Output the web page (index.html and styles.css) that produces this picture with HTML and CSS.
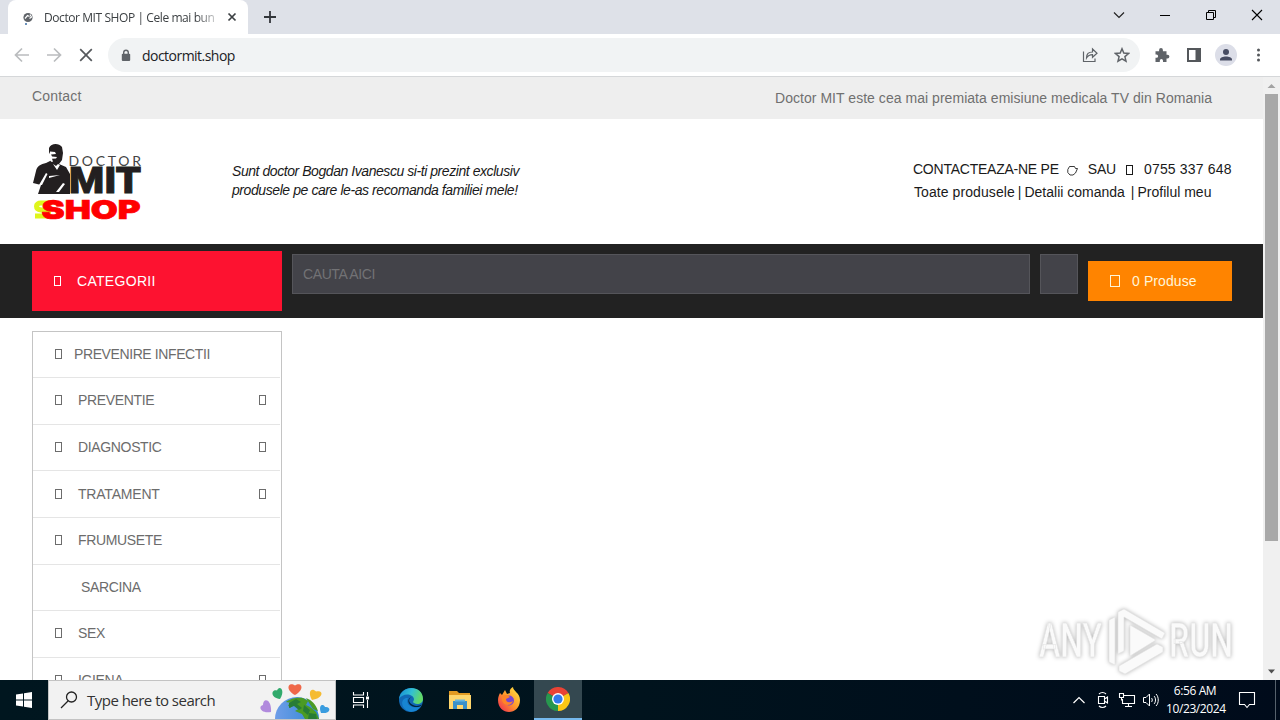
FILE: index.html
```html
<!DOCTYPE html>
<html lang="ro">
<head>
<meta charset="utf-8">
<title>Doctor MIT SHOP</title>
<link rel="stylesheet" href="styles.css">
</head>
<body>
<div class="screen">
  <div class="tabstrip">
    <div class="tab">
      <svg class="favicon" width="12" height="14" viewBox="0 0 12 14"><circle cx="6" cy="5.5" r="4.600" fill="#5f6368"/><path d="M3 6.500l2.500-3 2 1M8 2.500l1.500 2.500-2 1.500" stroke="#fff" stroke-width="1.200" fill="none"/><circle cx="4" cy="12" r="1" fill="#3b6ea5"/></svg>
      <span class="tab-title">Doctor MIT SHOP | Cele mai bun</span>
      <svg width="10" height="10" viewBox="0 0 10 10"><path d="M1.500 1.500l7 7M8.500 1.500l-7 7" stroke="#3c4043" stroke-width="1.700"/></svg>
    </div>
    <svg class="newtab" width="12" height="12" viewBox="0 0 12 12"><path d="M6 0v12M0 6h12" stroke="#33363b" stroke-width="1.800"/></svg>
    <div class="winbtns">
      <svg width="12" height="12" viewBox="0 0 12 12"><path d="M1 3.500l5 5 5-5" fill="none" stroke="#222" stroke-width="1.200"/></svg>
      <svg width="12" height="12" viewBox="0 0 12 12"><path d="M1 6.500h10" stroke="#000"/></svg>
      <svg width="12" height="12" viewBox="0 0 12 12"><path d="M1.500 3.500h7v7h-7zM3.500 3.500v-2h7v7h-2" fill="none" stroke="#000"/></svg>
      <svg width="12" height="12" viewBox="0 0 12 12"><path d="M1 1l10 10M11 1L1 11" stroke="#000" stroke-width="1.100"/></svg>
    </div>
  </div>
  <div class="toolbar">
    <svg class="nav-icon" width="16" height="16" viewBox="0 0 16 16"><path d="M15 8H2M8 1.500L1.500 8 8 14.500" fill="none" stroke="#babcbe" stroke-width="1.700"/></svg>
    <svg class="nav-icon" width="16" height="16" viewBox="0 0 16 16"><path d="M1 8h13M8 1.500L14.500 8 8 14.500" fill="none" stroke="#babcbe" stroke-width="1.700"/></svg>
    <svg class="nav-icon" width="16" height="16" viewBox="0 0 16 16"><path d="M2.200 2.200l11.600 11.600M13.800 2.200L2.200 13.800" stroke="#55585c" stroke-width="1.700"/></svg>
    <div class="omnibox">
      <svg width="10" height="13" viewBox="0 0 10 13"><path d="M2.700 5V3.500a2.300 2.300 0 0 1 4.600 0V5" fill="none" stroke="#5f6368" stroke-width="1.400"/><rect x=".8" y="4.700" width="8.400" height="7.300" rx="1" fill="#5f6368"/></svg>
      <span class="url">doctormit.shop</span>
      <svg width="16" height="16" viewBox="0 0 16 16"><path d="M1.500 4.500v10h11.500v-3M4.500 11c0-4 2-6 6-6V2l4.500 4.300-4.500 4V7.700C8 7.700 6 8.500 4.500 11z" fill="none" stroke="#5f6368" stroke-width="1.200"/></svg>
      <svg width="16" height="16" viewBox="0 0 16 16"><path d="M8 1.800l1.800 4.300 4.700.4-3.600 3.100 1.100 4.600L8 11.800l-4 2.400 1.100-4.600L1.500 6.500l4.700-.4z" fill="none" stroke="#5f6368" stroke-width="1.500"/></svg>
    </div>
    <div class="actions">
      <svg width="16" height="16" viewBox="0 0 16 16"><path d="M1.500 4.200h3.600V3a1.900 1.900 0 0 1 3.800 0v1.200h3.600v3.500h1a1.900 1.900 0 0 1 0 3.800h-1V15H9v-1.300a1.600 1.600 0 0 0-3.200 0V15H1.500v-4.200h1a1.600 1.600 0 0 0 0-3.200h-1z" fill="#5f6368"/></svg>
      <svg width="16" height="16" viewBox="0 0 16 16"><path d="M2 2h12v12H2z" fill="none" stroke="#54575b" stroke-width="2"/><path d="M9.500 2H14v12H9.500z" fill="#54575b"/></svg>
      <svg class="avatar" width="22" height="22" viewBox="0 0 22 22"><circle cx="11" cy="11" r="11" fill="#dcdee8"/><circle cx="11" cy="8" r="3" fill="#474c62"/><path d="M5 16.500v-1c0-4 12-4 12 0v1z" fill="#474c62"/></svg>
      <svg width="16" height="16" viewBox="0 0 16 16"><g fill="#54575b"><circle cx="8.500" cy="3" r="1.500"/><circle cx="8.500" cy="8" r="1.500"/><circle cx="8.500" cy="13" r="1.500"/></g></svg>
    </div>
  </div>

  <div class="viewport">
    <div class="page">
      <div class="topbar"><span class="contact">Contact</span><span class="slogan">Doctor MIT este cea mai premiata emisiune medicala TV din Romania</span></div>
      <div class="header">
        <svg class="logo" width="112" height="80" viewBox="0 0 112 80">
          <path d="M17 6c2-5 10-5 13-1l1 6-1 7-3 4 7 3 4 7v20H6l3-9-8-2 3-12c1-5 5-7 10-8l6-3-1-5-2-2z" fill="#231f20"/>
          <path d="M18 9.500l5 .5 1 2-5 .5 1 2 5 .5-1 1.500-4 .2 1 3h-2l-2-5zM21 22l4 6 3-5-2-1-2 2zM7 43l7-12 1.500 1L10 43zM17 34l11-1-11 3zM31 41l-7 9 3 0 6-8z" fill="#fff"/>
          <text class="logo-doctor" x="36.500" y="23.500" textLength="72.500">DOCTOR</text>
          <text class="logo-mit" x="37" y="51" textLength="72" lengthAdjust="spacingAndGlyphs">MIT</text>
          <path class="logo-glow" d="M20 61H9c-6 0-6 6 0 7h5c4 1 3 6-1 6H3"/>
          <text class="logo-shop" x="9.500" y="76.500" textLength="99" lengthAdjust="spacingAndGlyphs">SHOP</text>
        </svg>
        <div class="intro"><div class="in1">Sunt doctor Bogdan Ivanescu si-ti prezint exclusiv</div><div class="in2">produsele pe care le-as recomanda familiei mele!</div></div>
        <div class="links">
          <div class="call"><span class="c1">CONTACTEAZA-NE PE</span><svg width="11" height="11" viewBox="0 0 11 11"><path d="M2.500 1.500h5l1 2 2 0-2 4.500-2.500 2H3L.8 7.500V4.500z" fill="none" stroke="#222" stroke-width=".9"/></svg><span class="c2">SAU</span><i class="glyph"></i><span class="c3">0755 337 648</span></div>
          <div class="menu"><span class="m1">Toate produsele</span><span>|</span><span class="m2">Detalii comanda</span><span class="bar2">|</span><span class="m3">Profilul meu</span></div>
        </div>
      </div>
      <div class="navbar">
        <div class="cat"><i class="glyph"></i><span>CATEGORII</span></div>
        <div class="search"><span>CAUTA AICI</span></div>
        <div class="go"></div>
        <div class="cart"><i class="glyph"></i><span>0 Produse</span></div>
      </div>
      <div class="sidebar">
        <div class="item first"><i class="glyph"></i><span class="s0">PREVENIRE INFECTII</span></div>
        <div class="item"><i class="glyph"></i><span class="s1">PREVENTIE</span><i class="glyph more"></i></div>
        <div class="item"><i class="glyph"></i><span class="s2">DIAGNOSTIC</span><i class="glyph more"></i></div>
        <div class="item"><i class="glyph"></i><span class="s3">TRATAMENT</span><i class="glyph more"></i></div>
        <div class="item"><i class="glyph"></i><span class="s4">FRUMUSETE</span></div>
        <div class="item noicon"><span class="s5">SARCINA</span></div>
        <div class="item"><i class="glyph"></i><span class="s6">SEX</span></div>
        <div class="item"><i class="glyph"></i><span class="s7">IGIENA</span><i class="glyph more"></i></div>
      </div>
    </div>
    <div class="scrollbar">
      <svg width="17" height="17" viewBox="0 0 17 17"><path d="M4.500 11l4-4 4 4z" fill="#a3a3a3"/></svg>
      <div class="thumb"></div>
      <svg width="17" height="17" viewBox="0 0 17 17"><path d="M5 6.500h7l-3.500 4z" fill="#505050"/></svg>
    </div>
    <svg class="watermark" width="206" height="72" viewBox="0 0 206 72">
      <g class="wm">
        <text x="6" y="52" textLength="63" lengthAdjust="spacingAndGlyphs">ANY</text>
        <text x="136" y="52" textLength="64" lengthAdjust="spacingAndGlyphs">RUN</text>
        <path d="M76 57V15l6-3v48zM85 7l6-3 41 24-3 6-38-22v34l-6 3zM97 20l26 15-26 16zM86 61l38-22 6 3v5L92 69l-6-3z"/>
      </g>
    </svg>
  </div>

  <div class="taskbar">
    <div class="start"><svg width="18" height="18" viewBox="0 0 18 18"><path d="M1 3.500l7-1v6H1zM9 2.300L17 1v7.500H9zM1 9.500h7v6l-7-1zM9 9.500h8V17l-8-1.300z" fill="#fff"/></svg></div>
    <div class="tsearch">
      <svg width="18" height="18" viewBox="0 0 18 18"><circle cx="11.500" cy="6" r="5" fill="none" stroke="#222" stroke-width="1.300"/><path d="M8 10l-7 7" stroke="#222" stroke-width="1.300"/></svg>
      <span>Type here to search</span>
      <svg class="earth" width="76" height="38" viewBox="0 0 76 38">
        <defs><linearGradient id="sea"><stop offset="0" stop-color="#6e9de8"/><stop offset="1" stop-color="#3187d4"/></linearGradient></defs>
        <circle cx="38" cy="38" r="22" fill="url(#sea)"/>
        <path d="M27 21c4-4 13-5 17-4l5 3-2 4 4 2 6 5 3 7H46l-3-5-7-3 5-3-5-4-5 4-2-3 4-2zM47 17c6 2 10 7 12 13l-5-2z" fill="#4b9b24"/>
        <path d="M30 22l7-4 5 3-4 2 5 4-3 2-5-4-5 2zM45 24l6 5-2 5-5-4zM50 32l7 1 1 5h-9z" fill="#287c35"/>
        <path d="M36 14C25 8 30 0 36 4.500c6-4.500 11 3.500 0 9.500z" fill="#ef684a"/>
        <path d="M21 18c-10-1-9-10-3-8.500 2-6 9-1 3 8.500z" fill="#31aa6c"/>
        <path d="M53 19c-5-9 0-13 4-8.500 7-2 9 6-4 8.500z" fill="#f5bb32"/>
        <path d="M12 31C1 33-1 25 4 24c0-8 9-6 8 7z" fill="#b18add"/>
        <path d="M62 32c-3-8 2-10 4-6 6-1 7 7-4 6z" fill="#399cdf"/>
      </svg>
    </div>
    <div class="app"><svg width="18" height="18" viewBox="0 0 18 18"><path d="M1.500 1v3h10V1M1.500 17v-3h10v3M1.500 6.500h10v5h-10zM15.500 1v4M15.500 9v8" fill="none" stroke="#fff" stroke-width="1.100"/><path d="M14 5.500h3v3h-3z" fill="#fff"/></svg></div>
    <div class="app wide"><svg width="26" height="26" viewBox="0 0 26 26"><defs><linearGradient id="edge" x1="0" y1="0" x2="1" y2=".3"><stop offset="0" stop-color="#1489d5"/><stop offset=".55" stop-color="#32bfd4"/><stop offset="1" stop-color="#62d968"/></linearGradient></defs><circle cx="13" cy="13" r="12" fill="#1169b6"/><path d="M1 12C3-3 25-2 25 12c0 5-6 6-9 4-2-1 0-2 0-4-1-6-12-6-15 0z" fill="url(#edge)"/><path d="M10 11c-3 6 3 11 12 9-3 5-11 7-16 1-4-5-1-11 4-10z" fill="#1785d2"/><path d="M14 10c-4 1-4 6 1 8 3 1.500 6 1 9-.5-2 3-6 3-9 2-6-2-6-9-1-9.500z" fill="#00233b"/></svg></div>
    <div class="app"><svg class="folder" width="24" height="24" viewBox="0 0 24 24"><path d="M1 3h8l2 2h11v4H1z" fill="#e39b22"/><path d="M1 7h22v14H1z" fill="#ffd66c"/><path d="M5 13h14v8h-4v-4H9v4H5z" fill="#3a91c9"/><path d="M7 11.500h10v2H7z" fill="#66b6df"/></svg></div>
    <div class="app"><svg class="folder" width="26" height="26" viewBox="0 0 26 26"><defs><linearGradient id="fox" x1="1" y1="0" x2="0" y2="1"><stop offset="0" stop-color="#ffed45"/><stop offset=".5" stop-color="#ff982b"/><stop offset="1" stop-color="#ef2156"/></linearGradient></defs><path d="M4 6l2 2 3-5 2 4 3-1c-1-3 1-5 3-6 0 4 7 6 7 13 0 16-22 16-22 0 0-3 1-5 2-7z" fill="url(#fox)"/><circle cx="13" cy="13.500" r="5" fill="#7946d0"/><path d="M6 9c4-2 6-1 8 1l-4 2c0 4 4 4 7 2-2 6-10 5-11-1z" fill="#ff8427"/></svg></div>
    <div class="app active"><svg width="24" height="24" viewBox="0 0 24 24"><path d="M12 12L1.600 6A12 12 0 0 1 22.400 6z" fill="#e94335"/><path d="M12 12V24A12 12 0 0 1 1.600 6z" fill="#27974e"/><path d="M12 12L22.400 6A12 12 0 0 1 12 24z" fill="#fbc716"/><path d="M12 6h10.400L12 7z" fill="#e94335"/><path d="M17.200 15L12 24v-9z" fill="#fbc716"/><circle cx="12" cy="12" r="6" fill="#fff"/><circle cx="12" cy="12" r="4.600" fill="#327bed"/></svg></div>
    <div class="tray">
      <svg width="14" height="10" viewBox="0 0 14 10"><path d="M1.500 8L7 2.500 12.500 8" fill="none" stroke="#fff" stroke-width="1.200"/></svg>
      <svg class="cam" width="14" height="18" viewBox="0 0 14 18"><path d="M3 3c2-2 5-2 7 0M3 15c2 2 5 2 7 0M2.500 5.500h6v7h-6zM8.500 8l3-2v6l-3-2" fill="none" stroke="#fff" stroke-width="1.100"/></svg>
      <svg width="18" height="16" viewBox="0 0 18 16"><path d="M6 3.500h10.500v8H4.500V7M10.500 11.500v3M7 14.500h7M1.500 1.500h4v4h-4zM3.500 5.500v3" fill="none" stroke="#fff" stroke-width="1.100"/></svg>
      <svg class="vol" width="18" height="16" viewBox="0 0 18 16"><path d="M1.500 5.500H4L7.500 2v12L4 10.500H1.500zM9.500 6c1 1 1 3 0 4M12 4c2 2 2 6 0 8M14 2c3 3 3 9 0 12" fill="none" stroke="#fff"/></svg>
    </div>
    <div class="clock"><div>6:56 AM</div><div class="date">10/23/2024</div></div>
    <svg class="note" width="18" height="18" viewBox="0 0 18 18"><path d="M1.500 1.500h15v12h-5l-2.500 3-2.500-3h-5z" fill="none" stroke="#fff" stroke-width="1.100"/></svg>
    <div class="peek"></div>
  </div>
</div>
</body>
</html>
```
FILE: styles.css
```css
* { box-sizing: border-box; }
body { margin: 0; font-family: "Liberation Sans", Arial, sans-serif; font-size: 14px; color: #555; }
svg { display: block; flex: none; }
.screen { width: 1280px; height: 720px; display: flex; flex-direction: column; overflow: hidden; background: #fff; white-space: nowrap; }

.tabstrip { height: 34px; flex: none; background: #dee1e8; display: flex; align-items: center; padding-left: 8px; }
.tab { width: 240px; height: 34px; background: #fff; border-radius: 8px 8px 0 0; display: flex; align-items: center; padding: 0 11px 0 14px; }
.favicon { margin-top: 3px; }
.tab-title { width: 172px; margin: 0 11px 0 10px; font: 12px "Open Sans", sans-serif; letter-spacing: -.42px; color: #3c4043; -webkit-mask-image: linear-gradient(90deg, #000 88%, rgba(0, 0, 0, .25)); mask-image: linear-gradient(90deg, #000 88%, rgba(0, 0, 0, .25)); }
.newtab { margin-left: 16px; }
.winbtns { margin-left: auto; display: flex; gap: 34px; padding: 0 17px 5px 0; }

.toolbar { height: 43px; flex: none; display: flex; align-items: center; padding: 0 14px 0 14px; border-bottom: 1px solid #d5d7d9; }
.nav-icon { margin-right: 16px; }
.omnibox { width: 1032px; height: 34px; margin-left: -2px; border-radius: 17px; background: #f1f3f4; display: flex; align-items: center; padding: 0 10px 0 13px; gap: 16px; }
.url { flex: 1; margin-left: -5px; font: 14px "Open Sans", sans-serif; letter-spacing: -.53px; color: #202124; }
.actions { display: flex; align-items: center; gap: 16px; padding-left: 14px; }
.avatar { margin: 0 -3px; }

.viewport { height: 603px; flex: none; display: flex; position: relative; overflow: hidden; }
.page { width: 1263px; height: 603px; overflow: hidden; }
.topbar { height: 42px; background: #eee; display: flex; justify-content: space-between; padding: 11px 51px 0 32px; line-height: 17px; color: #707070; }
.contact { letter-spacing: .2px; }
.slogan { padding-top: 2px; width: 437px; letter-spacing: .04px; }
.header { height: 125px; display: flex; padding-left: 32px; color: #1a1a1a; }
.logo { margin-top: 23px; }
.logo-doctor { font: 14px Lato, sans-serif; fill: #444; }
.logo-mit { font: 900 37px Roboto, sans-serif; fill: #231f20; stroke: #231f20; stroke-width: 1; }
.logo-shop { font: 900 26px Inter, sans-serif; fill: #f00; stroke: #f00; stroke-width: .7; }
.logo-glow { fill: none; stroke: #dff51c; stroke-width: 5; filter: blur(.6px); }
.intro { width: 769px; padding: 43px 0 0 88px; font-style: italic; line-height: 19px; }
.in1 { letter-spacing: -.44px; }
.in2 { letter-spacing: -.42px; }
.links { padding-top: 39px; line-height: 23px; }
.call, .menu { display: flex; align-items: center; }
.call svg { margin: 1px 10px 0 8px; }
.call .glyph { margin: 0 11px 0 10px; }
.c1 { letter-spacing: -.24px; }
.c2 { letter-spacing: -.2px; }
.c3 { letter-spacing: .17px; }
.menu { gap: 3px; padding-left: 1px; }
.m1 { letter-spacing: .08px; }
.bar2 { margin-left: 3px; }
.glyph { flex: none; width: 7px; height: 10px; border: 1px solid currentColor; }

.navbar { height: 74px; background: #222; display: flex; padding: 7px 31px 0 32px; }
.cat { width: 250px; height: 60px; background: #fd1230; color: #fff; display: flex; align-items: center; padding-left: 22px; }
.cat span { margin-left: 16px; letter-spacing: .3px; }
.search, .go { height: 40px; margin: 3px 0 0 10px; background: #434349; border: 1px solid #55555a; }
.search { width: 738px; padding: 11px 10px; line-height: 17px; color: #727275; letter-spacing: -.4px; }
.go { width: 38px; }
.cart { width: 144px; height: 40px; margin: 10px 0 0 10px; background: #ff8400; color: #fff5d8; display: flex; align-items: center; padding-left: 22px; }
.cart .glyph { width: 10px; height: 12px; }
.cart span { margin-left: 12px; letter-spacing: .1px; }

.sidebar { width: 250px; margin: 13px 0 0 32px; border: 1px solid #c4c4c4; color: #6c6c6c; }
.item { height: 46.630px; border-bottom: 1px solid #e5e5e5; display: flex; align-items: center; padding: 0 15px 1px 22px; margin-right: 1px; letter-spacing: -.35px; }
.item.first { height: 46px; }
.item span { margin-left: 16px; }
.item.first span { margin-left: 12px; }
.s0 { letter-spacing: -.4px; }
.s3 { letter-spacing: -.2px; }
.item.noicon span { margin-left: 26px; }
.item .more { margin-left: auto; margin-right: -1px; }

.scrollbar { width: 17px; background: #f0f0f0; display: flex; flex-direction: column; }
.thumb { height: 447px; margin: 0 2px 122px; background: #a8a8a8; }
.watermark { position: absolute; left: 1033px; top: 528px; filter: drop-shadow(0 0 2px rgba(0, 0, 0, .3)); }
.wm { font: 500 48px "Roboto", sans-serif; fill: #fafafa; stroke: #e2e2e2; stroke-width: .6; }

.taskbar { height: 40px; flex: none; display: flex; align-items: center; background: linear-gradient(90deg, #00161f, #00131d 50%, #000b1b); color: #fff; font-family: "Open Sans", sans-serif; }
.start { width: 48px; display: flex; justify-content: center; }
.tsearch { width: 288px; height: 40px; background: #f2f2f2; border: 1px solid #c3c3c3; display: flex; align-items: center; padding-left: 11px; color: #333; overflow: hidden; }
.tsearch span { width: 130px; margin-left: 9px; font-size: 15px; letter-spacing: -.52px; }
.earth { margin-left: 42px; }
.app { width: 49px; height: 40px; display: flex; align-items: center; justify-content: center; }
.app.wide { width: 51px; }
.folder { margin-right: 2px; }
.app.active { width: 48px; background: #344850; border-bottom: 2px solid #76b9ed; }
.tray { margin-left: auto; display: flex; align-items: center; gap: 8px; }
.cam { margin: 0 0 0 2px; }
.vol { margin-left: -2px; }
.clock { width: 58px; margin-left: 6px; text-align: center; font-size: 12px; line-height: 18px; letter-spacing: -.4px; padding-bottom: 1px; }
.note { margin-left: 14px; }
.peek { width: 1px; height: 40px; margin: 0 4px 0 19px; background: #56616c; }
```
